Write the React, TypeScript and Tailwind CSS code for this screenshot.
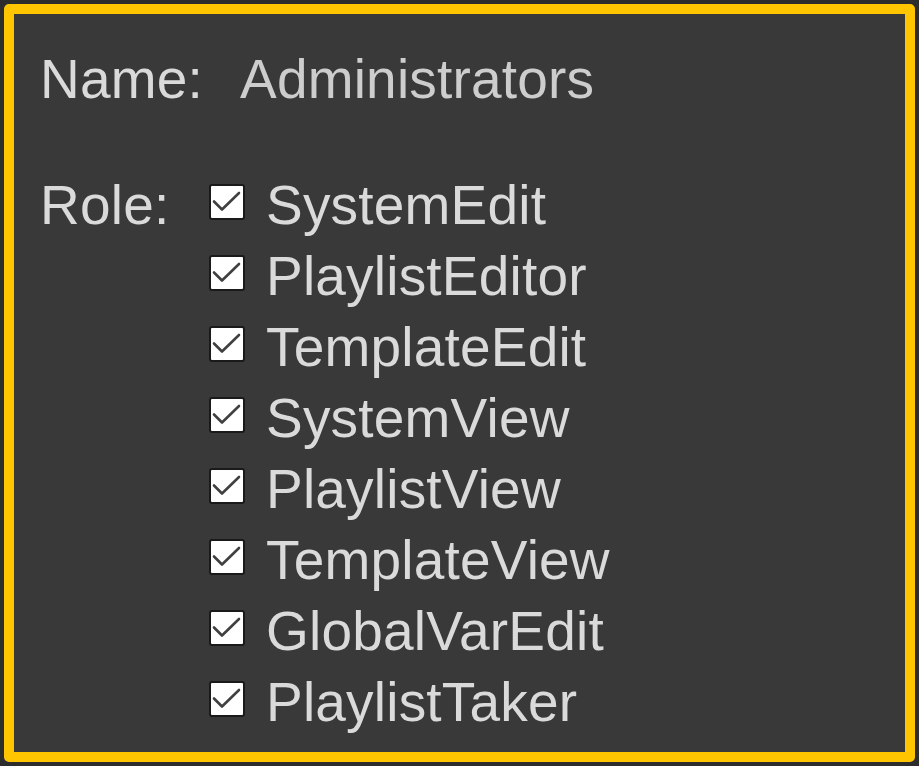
const roles = [
  "SystemEdit",
  "PlaylistEditor",
  "TemplateEdit",
  "SystemView",
  "PlaylistView",
  "TemplateView",
  "GlobalVarEdit",
  "PlaylistTaker",
];

const CheckBox = () => (
  <div className="mb-2 box-border flex h-[36px] w-[36px] shrink-0 items-center justify-center rounded-[3px] border-2 border-[#1a1a1a] bg-white">
    <svg className="h-[32px] w-[32px]" viewBox="0 0 32 32" fill="none">
      <path
        d="M3 15.5l8 8L28 7"
        stroke="#404040"
        strokeWidth={2.6}
        strokeLinecap="round"
        strokeLinejoin="round"
      />
    </svg>
  </div>
);

const App = () => {
  return (
    <div className="h-[766px] w-[919px] bg-[#2d2d2d] p-1 font-['Liberation_Sans',Arial,sans-serif]">
      <div className="h-full w-full rounded-[5px] border-[10px] border-[#ffc600] bg-[#393939] pt-[30px] pl-[26px] text-[55px] leading-[71px] tracking-[0.2px] text-[#dadada]">
        <div className="flex h-[71px] items-center">
          <span className="w-[200px]">Name:</span>
          <span className="text-[#cdcdcd]">Administrators</span>
        </div>
        <div className="mt-[55px] flex">
          <span className="w-[169px] leading-[71px]">Role:</span>
          <ul className="flex flex-col">
            {roles.map((role) => (
              <li key={role} className="flex h-[71px] items-center">
                <CheckBox />
                <span className="ml-[21px]">{role}</span>
              </li>
            ))}
          </ul>
        </div>
      </div>
    </div>
  );
};

export default App;
